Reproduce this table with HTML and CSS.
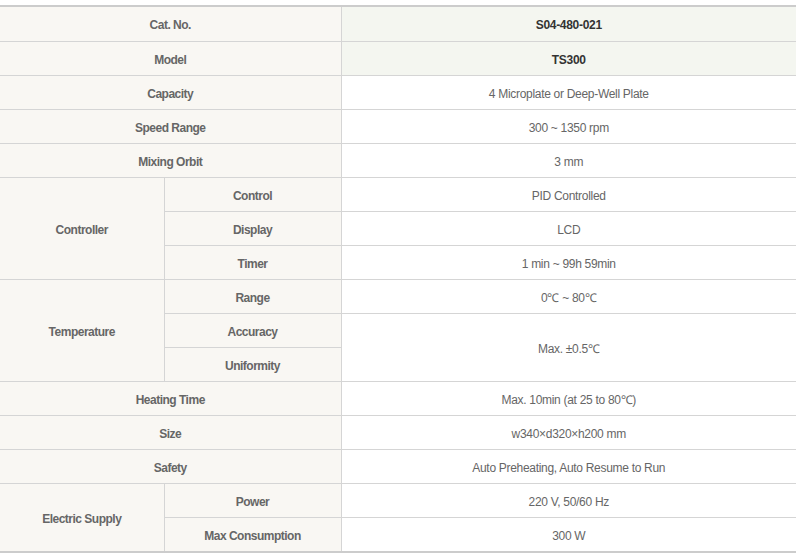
FILE: index.html
```html
<!DOCTYPE html>
<html lang="en">
<head>
<meta charset="utf-8">
<title>TS300 Specification</title>
<link rel="stylesheet" href="styles.css">
</head>
<body>
<table class="spec">
  <colgroup>
    <col class="c1">
    <col class="c2">
    <col class="c3">
  </colgroup>
  <tbody>
    <tr class="first"><th colspan="2">Cat. No.</th><td class="hl">S04-480-021</td></tr>
    <tr><th colspan="2">Model</th><td class="hl">TS300</td></tr>
    <tr><th colspan="2">Capacity</th><td>4 Microplate or Deep-Well Plate</td></tr>
    <tr><th colspan="2">Speed Range</th><td>300 ~ 1350 rpm</td></tr>
    <tr><th colspan="2">Mixing Orbit</th><td>3 mm</td></tr>
    <tr><th rowspan="3">Controller</th><th>Control</th><td>PID Controlled</td></tr>
    <tr><th>Display</th><td>LCD</td></tr>
    <tr><th>Timer</th><td>1 min ~ 99h 59min</td></tr>
    <tr><th rowspan="3">Temperature</th><th>Range</th><td>0℃ ~ 80℃</td></tr>
    <tr><th>Accuracy</th><td rowspan="2">Max. ±0.5℃</td></tr>
    <tr><th>Uniformity</th></tr>
    <tr><th colspan="2">Heating Time</th><td>Max. 10min (at 25 to 80℃)</td></tr>
    <tr><th colspan="2">Size</th><td>w340×d320×h200 mm</td></tr>
    <tr><th colspan="2">Safety</th><td>Auto Preheating, Auto Resume to Run</td></tr>
    <tr><th rowspan="2">Electric Supply</th><th>Power</th><td>220 V, 50/60 Hz</td></tr>
    <tr><th>Max Consumption</th><td>300 W</td></tr>
  </tbody>
</table>
</body>
</html>
```
FILE: styles.css
```css
html, body {
  margin: 0;
  padding: 0;
  background: #ffffff;
}

body {
  padding-top: 5px;
}

.spec {
  width: 796px;
  border-collapse: collapse;
  table-layout: fixed;
  border-top: 2px solid #cccccc;
  border-bottom: 2px solid #cccccc;
  font-family: "Liberation Sans", Arial, sans-serif;
  font-size: 12px;
}

.c1 { width: 164px; }
.c2 { width: 177px; }
.c3 { width: 455px; }

.spec th,
.spec td {
  height: 31px;
  padding: 2px 0 0;
  text-align: center;
  vertical-align: middle;
  border: 1px solid #d5d5d5;
  line-height: 14px;
}

.spec tr.first > * { height: 32px; }

.spec tr > :first-child { border-left: none; }
.spec tr > :last-child { border-right: none; }
.spec tr:first-child > * { border-top: 2px solid #cccccc; }
.spec tr:last-child > * { border-bottom: 2px solid #cccccc; }

.spec th {
  background: #f9f7f3;
  color: #666666;
  font-weight: bold;
  letter-spacing: -0.5px;
}

.spec td {
  background: #ffffff;
  color: #666666;
  font-weight: normal;
  letter-spacing: -0.3px;
}

.spec td.hl {
  background: #f4f6f0;
  color: #333333;
  font-weight: bold;
  letter-spacing: -0.3px;
}
```
